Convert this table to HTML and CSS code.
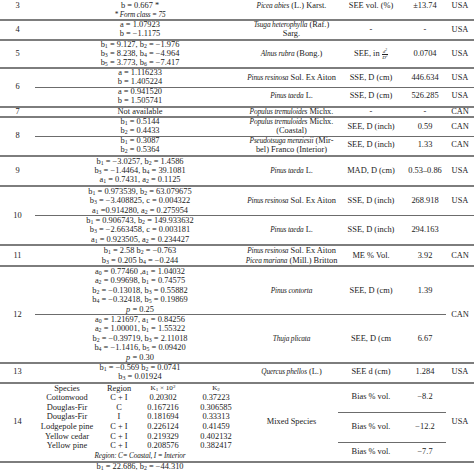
FILE: index.html
```html
<!DOCTYPE html>
<html>
<head>
<meta charset="utf-8">
<link rel="stylesheet" href="styles.css">
</head>
<body>
<table class="t">
<colgroup><col class="c1"><col class="c2"><col class="c3"><col class="c4"><col class="c5"><col class="c6"></colgroup>
<tbody>
<tr>
  <td class="n">3</td>
  <td><div class="blank"></div>b = 0.667 *<br><i class="note">* Form class = 75</i></td>
  <td><i>Picea abies</i> (L.) Karst.</td>
  <td>SEE vol. (%)</td><td>±13.74</td><td>USA</td>
</tr>
<tr class="g">
  <td class="n">4</td>
  <td>a = 1.07923<br>b = −1.1175</td>
  <td><i>Tsuga heterophylla</i> (Raf.)<br>Sarg.</td>
  <td>-</td><td>-</td><td>USA</td>
</tr>
<tr class="g">
  <td class="n">5</td>
  <td>b<sub>1</sub> = 9.127, b<sub>2</sub> = −1.976<br>b<sub>3</sub> = 8.238, b<sub>4</sub> = −4.964<br>b<sub>5</sub> = 3.773, b<sub>6</sub> = −7.417</td>
  <td><i>Alnus rubra</i> (Bong.)</td>
  <td>SEE, in <span class="frac"><span class="num">d<sup>2</sup></span><span>D<sup>2</sup></span></span></td><td>0.0704</td><td>USA</td>
</tr>
<tr class="g">
  <td class="n" rowspan="2">6</td>
  <td>a = 1.116233<br>b = 1.405224</td>
  <td><i>Pinus resinosa</i> Sol. Ex Aiton</td>
  <td>SSE, D (cm)</td><td>446.634</td><td>USA</td>
</tr>
<tr class="sub">
  <td>a = 0.941520<br>b = 1.505741</td>
  <td><i>Pinus taeda</i> L.</td>
  <td>SSE, D (cm)</td><td>526.285</td><td>USA</td>
</tr>
<tr class="g">
  <td class="n">7</td>
  <td>Not available</td>
  <td><i>Populus tremuloides</i> Michx.</td>
  <td>-</td><td>-</td><td>CAN</td>
</tr>
<tr class="g">
  <td class="n" rowspan="2">8</td>
  <td>b<sub>1</sub> = 0.5144<br>b<sub>2</sub> = 0.4433</td>
  <td><i>Populus tremuloides</i> Michx.<br>(Coastal)</td>
  <td>SEE, D (inch)</td><td>0.59</td><td>CAN</td>
</tr>
<tr class="sub">
  <td>b<sub>1</sub> = 0.3087<br>b<sub>2</sub> = 0.5364</td>
  <td><i>Pseudotsuga menziesii</i> (Mir-<br>bel) Franco (Interior)</td>
  <td>SEE, D (inch)</td><td>1.33</td><td>CAN</td>
</tr>
<tr class="g tall">
  <td class="n">9</td>
  <td>b<sub>1</sub> = −3.0257, b<sub>2</sub> = 1.4586<br>b<sub>3</sub> = −1.4464, b<sub>4</sub> = 39.1081<br>a<sub>1</sub> = 0.7431, a<sub>2</sub> = 0.1125</td>
  <td><i>Pinus taeda</i> L.</td>
  <td>MAD, D (cm)</td><td>0.53–0.86</td><td>USA</td>
</tr>
<tr class="g tall">
  <td class="n" rowspan="2">10</td>
  <td>b<sub>1</sub> = 0.973539, b<sub>2</sub> = 63.079675<br>b<sub>3</sub> = −3.408825, c = 0.004322<br>a<sub>1</sub> =0.914280, a<sub>2</sub> = 0.275954</td>
  <td><i>Pinus resinosa</i> Sol. Ex Aiton</td>
  <td>SSE, D (inch)</td><td>268.918</td><td>USA</td>
</tr>
<tr class="sub tall">
  <td>b<sub>1</sub> = 0.906743, b<sub>2</sub> = 149.933632<br>b<sub>3</sub> = −2.663458, c = 0.003181<br>a<sub>1</sub> = 0.923505, a<sub>2</sub> = 0.234427</td>
  <td><i>Pinus taeda</i> L.</td>
  <td>SSE, D (inch)</td><td>294.163</td><td></td>
</tr>
<tr class="g tall">
  <td class="n">11</td>
  <td>b<sub>1</sub> = 2.58 b<sub>2</sub> = −0.763<br>b<sub>3</sub> = 0.205 b<sub>4</sub> = −0.244</td>
  <td><i>Pinus resinosa</i> Sol. Ex Aiton<br><i>Picea mariana</i> (Mill.) Britton</td>
  <td>ME % Vol.</td><td>3.92</td><td>CAN</td>
</tr>
<tr class="g tall">
  <td class="n" rowspan="2">12</td>
  <td>a<sub>0</sub> = 0.77460 ,a<sub>1</sub> = 1.04032<br>a<sub>2</sub> = 0.99698, b<sub>1</sub> = 0.74575<br>b<sub>2</sub> = −0.13018, b<sub>3</sub> = 0.55882<br>b<sub>4</sub> = −0.32418, b<sub>5</sub> = 0.19869<br><i class="m">p</i> = 0.25</td>
  <td><i>Pinus contorta</i></td>
  <td>SEE, D (cm)</td><td>1.39</td><td rowspan="2">CAN</td>
</tr>
<tr class="sub tall">
  <td>a<sub>0</sub> = 1.21697, a<sub>1</sub> = 0.84256<br>a<sub>2</sub> = 1.00001, b<sub>1</sub> = 1.55322<br>b<sub>2</sub> = −0.39719, b<sub>3</sub> = 2.11018<br>b<sub>4</sub> = −1.1416, b<sub>5</sub> = 0.09420<br><i class="m">p</i> = 0.30</td>
  <td><i>Thuja plicata</i></td>
  <td>SEE, D (cm</td><td>6.67</td>
</tr>
<tr class="g">
  <td class="n">13</td>
  <td>b<sub>1</sub> = −0.569 b<sub>2</sub> = 0.0741<br>b<sub>3</sub> = 0.01924</td>
  <td><i>Quercus phellos</i> (L.)</td>
  <td>SEE d (cm)</td><td>1.284</td><td>USA</td>
</tr>
<tr class="g r14a">
  <td class="n" rowspan="3">14</td>
  <td rowspan="3">
    <table class="inner">
      <colgroup><col class="i1"><col class="i2"><col class="i3"><col class="i4"></colgroup>
      <tr class="hd"><td>Species</td><td>Region</td><td class="k">K<sub>1</sub> × 10<sup>2</sup></td><td class="k">K<sub>2</sub></td></tr>
      <tr><td>Cottonwood</td><td>C + I</td><td>0.20302</td><td>0.37223</td></tr>
      <tr><td>Douglas-Fir</td><td>C</td><td>0.167216</td><td>0.306585</td></tr>
      <tr><td>Douglas-Fir</td><td>I</td><td>0.181694</td><td>0.33313</td></tr>
      <tr><td>Lodgepole pine</td><td>C + I</td><td>0.226124</td><td>0.41459</td></tr>
      <tr><td>Yellow cedar</td><td>C + I</td><td>0.219329</td><td>0.402132</td></tr>
      <tr><td>Yellow pine</td><td>C + I</td><td>0.208576</td><td>0.382417</td></tr>
      <tr><td colspan="4"><i class="note">Region: C= Coastal, I = Interior</i></td></tr>
    </table>
  </td>
  <td rowspan="3">Mixed Species</td>
  <td>Bias % vol.</td><td>−8.2</td>
  <td rowspan="3">USA</td>
</tr>
<tr class="sub r14b">
  <td>Bias % vol.</td><td>−12.2</td>
</tr>
<tr class="sub r14c">
  <td>Bias % vol.</td><td>−7.7</td>
</tr>
<tr class="g">
  <td class="n"></td>
  <td>b<sub>1</sub> = 22.686, b<sub>2</sub> = −44.310</td>
  <td></td><td></td><td></td><td></td>
</tr>
</tbody>
</table>
</body>
</html>
```

FILE: styles.css
```css
html, body {
  margin: 0;
  padding: 0;
  background: #ffffff;
}

body {
  width: 474px;
  height: 474px;
  overflow: hidden;
  font-family: "Liberation Serif", "Times New Roman", serif;
  font-size: 8.4px;
  color: #222222;
}

.t {
  width: 474px;
  table-layout: fixed;
  border-collapse: separate;
  border-spacing: 0;
  margin-top: -7px;
}

.c1 { width: 35px; }
.c2 { width: 210px; }
.c3 { width: 93px; }
.c4 { width: 66px; }
.c5 { width: 42px; }
.c6 { width: 28px; }

.t > tbody > tr > td {
  padding: 0;
  text-align: center;
  vertical-align: middle;
  line-height: 8.8px;
  white-space: nowrap;
}

.t > tbody > tr.tall > td {
  line-height: 9.4px;
}

.t > tbody > tr.g > td {
  border-top: 2px solid #7d7d7d;
}

.t > tbody > tr.sub > td {
  border-top: 1px solid #6c6c6c;
}

.blank {
  height: 8.8px;
}

i {
  font-size: 0.88em;
  letter-spacing: -0.15px;
}

i.m {
  font-size: 1em;
  letter-spacing: 0;
}

i.note {
  font-size: 0.86em;
}

sub, sup {
  font-size: 0.7em;
  line-height: 0;
}

sub {
  vertical-align: -0.25em;
}

sup {
  vertical-align: 0.45em;
}

.frac {
  display: inline-flex;
  flex-direction: column;
  align-items: center;
  vertical-align: middle;
  font-size: 5px;
  line-height: 5px;
  font-style: italic;
}

.frac .num {
  border-bottom: 0.6px solid #222222;
  padding: 0 1px;
}

.r14a > td { height: 27.8px; }
.r14b > td { height: 29px; }
.r14c > td { height: 18px; }

.inner {
  width: 210px;
  table-layout: fixed;
  border-collapse: collapse;
}

.i1 { width: 64px; }
.i2 { width: 40px; }
.i3 { width: 48px; }
.i4 { width: 58px; }

.inner td {
  padding: 0;
  text-align: center;
  line-height: 9.6px;
  white-space: nowrap;
}

.inner .k {
  font-size: 0.85em;
}
```
